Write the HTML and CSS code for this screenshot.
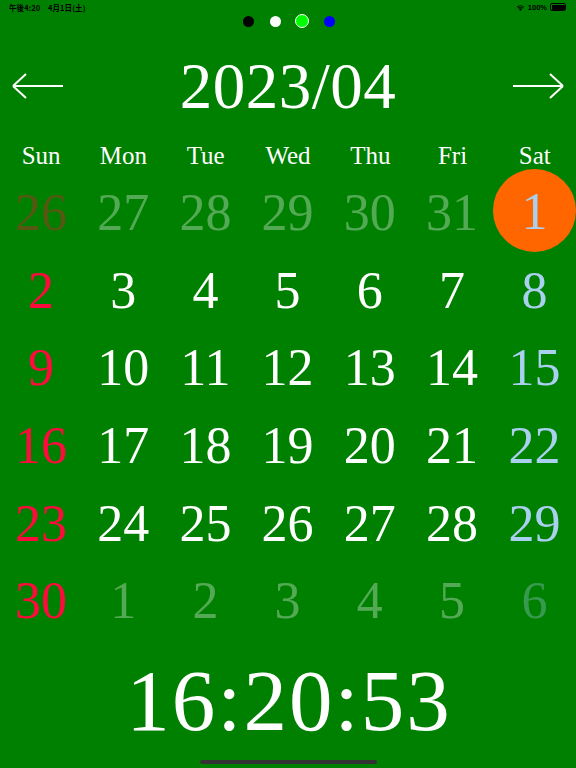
FILE: index.html
```html
<!DOCTYPE html>
<html lang="ja">
<head>
<meta charset="utf-8">
<title>Calendar</title>
<link rel="stylesheet" href="styles.css">
</head>
<body>
<div class="screen">
  <div class="status">
    <span class="status-left">午後4:20　4月1日(土)</span>
    <span class="status-right">
      <svg class="wifi" width="9" height="7" viewBox="0 0 12 9"><path d="M6 9 L3.8 6.6 A3.2 3.2 0 0 1 8.2 6.6 Z M2.4 5.1 A5.2 5.2 0 0 1 9.6 5.1 L8.8 5.9 A4 4 0 0 0 3.2 5.9 Z M0.9 3.6 A7.4 7.4 0 0 1 11.1 3.6 L10.3 4.4 A6.2 6.2 0 0 0 1.7 4.4 Z" fill="#000"/></svg>
      <span class="pct">100%</span>
      <span class="battery"><span class="battery-fill"></span></span>
    </span>
  </div>
  <div class="dots">
    <span class="dot dot-black"></span>
    <span class="dot dot-white"></span>
    <span class="dot dot-lime"></span>
    <span class="dot dot-blue"></span>
  </div>
  <div class="header">
    <svg class="arrow" width="52" height="28" viewBox="0 0 52 28"><path d="M1 14 H51 M1 14 L14 2 M1 14 L14 26" stroke="#fff" stroke-width="2" fill="none"/></svg>
    <div class="title">2023/04</div>
    <svg class="arrow" width="52" height="28" viewBox="0 0 52 28"><path d="M1 14 H51 M51 14 L38 2 M51 14 L38 26" stroke="#fff" stroke-width="2" fill="none"/></svg>
  </div>
  <div class="weekdays">
    <span>Sun</span><span>Mon</span><span>Tue</span><span>Wed</span><span>Thu</span><span>Fri</span><span>Sat</span>
  </div>
  <div class="days">
    <span class="day sun other">26</span>
    <span class="day other">27</span>
    <span class="day other">28</span>
    <span class="day other">29</span>
    <span class="day other">30</span>
    <span class="day other">31</span>
    <span class="day sat"><span class="today">1</span></span>

    <span class="day sun">2</span>
    <span class="day">3</span>
    <span class="day">4</span>
    <span class="day">5</span>
    <span class="day">6</span>
    <span class="day">7</span>
    <span class="day sat">8</span>

    <span class="day sun">9</span>
    <span class="day">10</span>
    <span class="day">11</span>
    <span class="day">12</span>
    <span class="day">13</span>
    <span class="day">14</span>
    <span class="day sat">15</span>

    <span class="day sun">16</span>
    <span class="day">17</span>
    <span class="day">18</span>
    <span class="day">19</span>
    <span class="day">20</span>
    <span class="day">21</span>
    <span class="day sat">22</span>

    <span class="day sun">23</span>
    <span class="day">24</span>
    <span class="day">25</span>
    <span class="day">26</span>
    <span class="day">27</span>
    <span class="day">28</span>
    <span class="day sat">29</span>

    <span class="day sun">30</span>
    <span class="day other">1</span>
    <span class="day other">2</span>
    <span class="day other">3</span>
    <span class="day other">4</span>
    <span class="day other">5</span>
    <span class="day sat other">6</span>
  </div>
  <div class="clock">16:20:53</div>
  <div class="home-bar"><span class="home-indicator"></span></div>
</div>
</body>
</html>
```

FILE: styles.css
```css
html, body {
  margin: 0;
  padding: 0;
  background: #008000;
}

.screen {
  width: 576px;
  height: 768px;
  background: #008000;
  display: flex;
  flex-direction: column;
  font-family: "Liberation Serif", "DejaVu Serif", serif;
  color: #fff;
  overflow: hidden;
}

.status {
  height: 14px;
  display: flex;
  justify-content: space-between;
  align-items: center;
  padding: 0 10px 0 9px;
  font-family: "Noto Sans CJK JP", "Liberation Sans", sans-serif;
  font-size: 7.5px;
  font-weight: 700;
  color: #000;
}

.status-left {
  letter-spacing: 0.1px;
}

.status-right {
  display: flex;
  align-items: center;
  gap: 2px;
}

.wifi {
  margin-right: 1px;
}

.pct {
  font-family: "Liberation Sans", sans-serif;
  font-size: 7.5px;
}

.battery {
  width: 13px;
  height: 5px;
  border: 1px solid #000;
  border-radius: 2px;
  padding: 0.5px;
  display: flex;
  margin-left: 1px;
}

.battery-fill {
  flex: 1;
  background: #000;
  border-radius: 1px;
}

.dots {
  height: 14px;
  display: flex;
  justify-content: center;
  align-items: center;
  gap: 16px;
  padding-left: 1px;
}

.dot {
  width: 11px;
  height: 11px;
  border-radius: 50%;
  box-sizing: border-box;
}

.dot-black { background: #000; }
.dot-white { background: #fff; }
.dot-lime {
  background: #00ff00;
  border: 1.5px solid #fff;
  width: 14px;
  height: 14px;
  margin: 0 -1.5px;
}
.dot-blue { background: #0000ff; }

.header {
  height: 112px;
  display: flex;
  justify-content: space-between;
  align-items: center;
  padding: 4px 12px 0;
  box-sizing: border-box;
}

.title {
  font-size: 65px;
  line-height: 1;
  letter-spacing: 0.5px;
}

.weekdays {
  height: 32px;
  display: grid;
  grid-template-columns: repeat(7, 1fr);
  align-items: center;
  text-align: center;
  font-size: 25px;
  line-height: 32px;
}

.days {
  margin-top: 2px;
  display: grid;
  grid-template-columns: repeat(7, 1fr);
  grid-template-rows: repeat(6, 77.6px);
  font-size: 52px;
}

.day {
  display: flex;
  justify-content: center;
  align-items: center;
  color: #fff;
}

.day.sun { color: #ff0a3c; }
.day.sat { color: #aad0f0; }
.day.other { opacity: 0.33; }

.today {
  width: 83px;
  height: 83px;
  border-radius: 50%;
  background: #ff6600;
  display: flex;
  justify-content: center;
  align-items: center;
  margin-bottom: 5px;
  line-height: 1;
  padding-top: 4px;
  box-sizing: border-box;
}

.clock {
  height: 120px;
  display: flex;
  justify-content: center;
  align-items: center;
  font-size: 87px;
  letter-spacing: 2px;
  line-height: 1;
  padding: 2px 0 0 2px;
  box-sizing: border-box;
}

.home-bar {
  flex: 1;
  display: flex;
  justify-content: center;
  padding-top: 0;
}

.home-indicator {
  width: 177px;
  height: 4px;
  border-radius: 2px;
  background: #333;
}
```
